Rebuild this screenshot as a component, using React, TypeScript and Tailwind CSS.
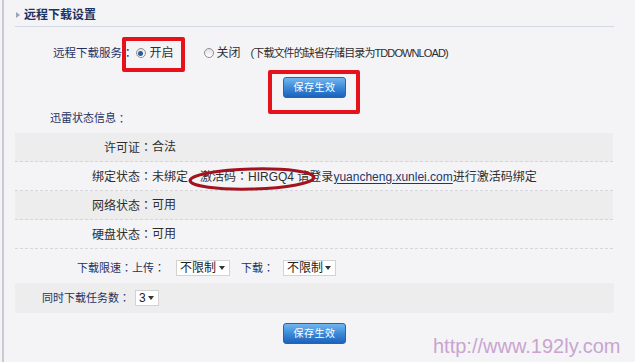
const navy = "text-[#1f3260]";

// centred full-width colon (TC punctuation sits in the middle of the box)
function C() {
  return <span style={{ fontFamily: '"Noto Sans CJK TC", sans-serif' }}>：</span>;
}

function Radio({ checked }: { checked?: boolean }) {
  return (
    <span className="flex h-[10px] w-[10px] items-center justify-center rounded-full border border-[#8f8f8f] bg-gradient-to-b from-[#e2e2e2] to-white">
      {checked && <span className="h-[5px] w-[5px] rounded-full bg-[#2b5a9f]" />}
    </span>
  );
}

function Select({ value, w }: { value: string; w: string }) {
  return (
    <span className={`flex h-[16px] items-center justify-between border border-[#d2d2d2] bg-white pl-[3px] pr-[4px] text-[12px] leading-none text-[#222] ${w}`}>
      {value}
      <svg width="6" height="4" viewBox="0 0 6 4">
        <path d="M0 0h6L3 4z" fill="#333" />
      </svg>
    </span>
  );
}

function SaveButton() {
  return (
    <button className="h-[21px] w-[63px] rounded-[3px] border border-[#2563b4] bg-gradient-to-b from-[#72b6ee] via-[#3b8bd9] to-[#1d62bb] text-[10px] tracking-[0.5px] text-white">
      保存生效
    </button>
  );
}

function InfoRow({ label, shaded, children }: { label: string; shaded?: boolean; children: React.ReactNode }) {
  return (
    <div className={`flex h-[29px] items-center border-b border-dashed border-[#d6d6d8] text-[12px] text-[#2e2e2e] ${shaded ? "bg-[#ededee]" : ""}`}>
      <span className="w-[137px] text-right">
        {label}
        <C />
      </span>
      <span>{children}</span>
    </div>
  );
}

export default function App() {
  return (
    <div
      className="relative flex h-[362px] w-[635px] overflow-hidden bg-[#f4f4f7]"
      style={{ fontFamily: '"Liberation Sans", "Noto Sans CJK SC", sans-serif' }}
    >
      <div className="ml-[2px] w-[2px] bg-[#c8cbd2]" />
      <div className="flex w-[610px] flex-col pl-[11px]">
        {/* header */}
        <div className="flex h-[27px] items-end border-b border-[#d2d9e2] pb-[3px]">
          <div className="flex h-[16px] items-center gap-[4px]">
            <svg width="4" height="6" viewBox="0 0 4 6" className="ml-[1px]">
              <path d="M0 0l4 3-4 3z" fill="#9aa5b5" />
            </svg>
            <span className={`text-[12px] font-bold ${navy}`}>远程下载设置</span>
          </div>
        </div>

        {/* service switch */}
        <div className="mt-[16px] flex h-[20px] items-center pl-[38px] text-[12px] text-[#2e2e2e]">
          <span className={`text-[11.5px] ${navy}`}>
            远程下载服务
            <C />
          </span>
          <span className="ml-[2px] flex items-center gap-[4px]">
            <Radio checked />
            开启
          </span>
          <span className="ml-[30px] flex items-center gap-[3px]">
            <Radio />
            关闭
          </span>
          <span className="ml-[10px] text-[11px] tracking-[-0.9px]">(下载文件的缺省存储目录为TDDOWNLOAD)</span>
        </div>

        <div className="mt-[14px] flex justify-center">
          <SaveButton />
        </div>

        <div className={`mt-[12px] flex h-[16px] items-center pl-[35px] text-[11px] ${navy}`}>
          迅雷状态信息
          <C />
        </div>

        {/* status table */}
        <div className="mt-[7px] w-[598px]">
          <InfoRow label="许可证" shaded>
            合法
          </InfoRow>
          <InfoRow label="绑定状态">
            未绑定，激活码
            <C />
            HIRGQ4&nbsp;请登录
            <span className="text-[#22366a] underline underline-offset-2">yuancheng.xunlei.com</span>
            进行激活码绑定
          </InfoRow>
          <InfoRow label="网络状态" shaded>
            可用
          </InfoRow>
          <InfoRow label="硬盘状态">可用</InfoRow>
        </div>

        {/* speed limit */}
        <div className={`flex h-[34px] items-center pl-[62px] pt-[4px] text-[11px] ${navy}`}>
          <span>
            下载限速
            <C />
            上传
            <C />
          </span>
          <span className="ml-[11px]">
            <Select value="不限制" w="w-[54px]" />
          </span>
          <span className="ml-[11px]">
            下载
            <C />
          </span>
          <span className="ml-[9px]">
            <Select value="不限制" w="w-[53px]" />
          </span>
        </div>

        <div className={`flex h-[30px] items-center bg-[#ededee] pl-[27px] text-[11px] ${navy}`}>
          <span>
            同时下载任务数
            <C />
          </span>
          <span className="ml-[5px]">
            <Select value="3" w="w-[24px]" />
          </span>
        </div>

        <div className="mt-[10px] flex justify-center">
          <SaveButton />
        </div>
      </div>

      {/* annotations */}
      <div className="absolute left-[122px] top-[37px] h-[35px] w-[63px] rounded-[2px] border-[4px] border-[#e5121b]" />
      <div className="absolute left-[268px] top-[70px] h-[44px] w-[92px] rounded-[2px] border-[4px] border-[#e5121b]" />
      <svg className="absolute left-[185px] top-[165px]" width="134" height="28" viewBox="0 0 134 28">
        <ellipse cx="67" cy="14" rx="62" ry="10" fill="none" stroke="#a3121f" strokeWidth="3" transform="rotate(-1.5 67 14)" />
      </svg>
      <div className="absolute left-[433px] top-[336px] text-[20px] leading-[20px] text-[#c9a4d0]">http://www.192ly.com</div>
    </div>
  );
}
